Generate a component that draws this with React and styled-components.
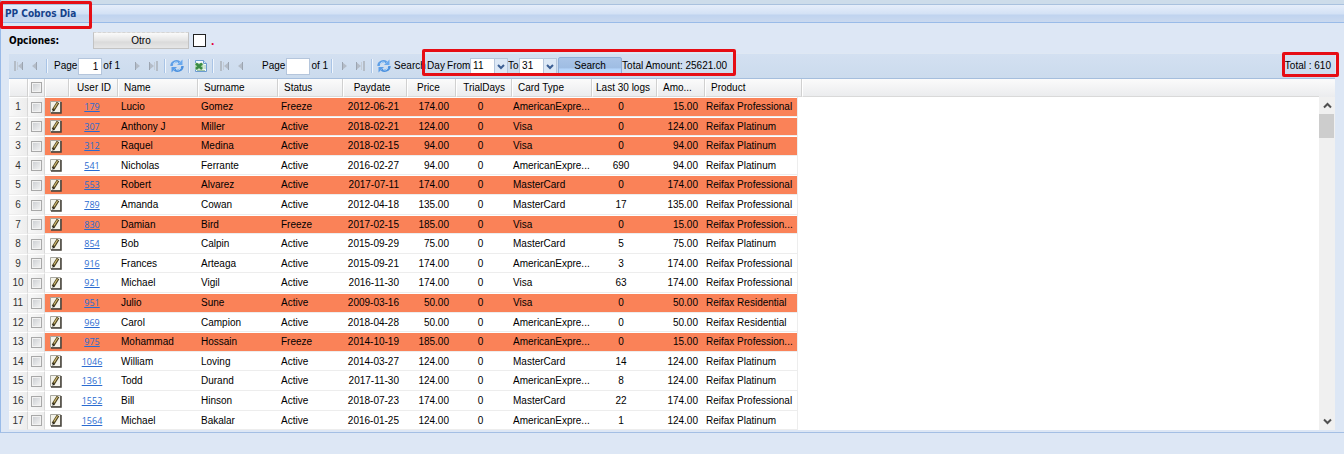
import React from "react";
import styled, { createGlobalStyle } from "styled-components";

const GlobalStyle = createGlobalStyle`
  * { box-sizing: border-box; }
  body {
    margin: 0;
    background: #dfe8f6;
    color: #000;
    font: 10px/14px "Liberation Sans", Arial, sans-serif;
  }
  button, input, select { font: inherit; color: inherit; margin: 0; }
`;

const Page = styled.main`
  min-height: 100vh;
  background: #dde7f5;
`;

const Panel = styled.section`
  position: relative;
  border-left: 1px solid #99bbe8;
  border-bottom: 1px solid #a4bfe4;
`;

const TitleBar = styled.header`
  display: flex;
  align-items: center;
  height: 23px;
  padding: 5px 4px 0;
  border-bottom: 1px solid #99bbe8;
  background: linear-gradient(#cddcea 0 4px, #a9c1de 4px 5px, #e6eefa 5px, #d3e1f5 14px, #bfd3ef 15px, #cad9ef 22px);
`;

const Title = styled.h1`
  margin: 0;
  color: #15428b;
  font: bold 10px/14px "DejaVu Sans Condensed", "DejaVu Sans", sans-serif;
`;

const Highlight = styled.span`
  position: absolute;
  border: 3px solid #e60d14;
  border-radius: 2px;
  pointer-events: none;
  z-index: 2;
`;

const TitleHighlight = styled(Highlight)`
  top: 1px;
  left: -1px;
  width: 92px;
  height: 28px;
`;

const FilterHighlight = styled(Highlight)`
  inset: -7px -9px 0 -5px;
`;

const TotalHighlight = styled(Highlight)`
  inset: -7px -8px -4px -3px;
`;

const Options = styled.div`
  display: flex;
  align-items: center;
  height: 30px;
  padding: 5px 8px 0;
`;

const OptionsLabel = styled.span`
  width: 84px;
  font: bold 10px/14px "DejaVu Sans Condensed", "DejaVu Sans", sans-serif;
`;

const OtherButton = styled.button`
  width: 96px;
  height: 17px;
  padding: 0;
  border: 1px solid #c3c3c3;
  border-top: 1px dashed #d5d5d5;
  background: linear-gradient(#fafafa, #e4e4e4 50%, #dadada 60%, #e6e6e6);
`;

const ColorBox = styled.input`
  appearance: none;
  width: 13px;
  height: 13px;
  margin-left: 4px;
  border: 1px solid #222;
  background: #fff;
`;

const Dot = styled.span`
  margin-left: 5px;
  color: #e3003a;
  font: bold 12px/14px "Liberation Sans", sans-serif;
`;

const Grid = styled.div`
  margin: 0 9px 2px 8px;
`;

const Toolbar = styled.div`
  display: flex;
  align-items: center;
  height: 26px;
  padding: 0 4px 0 2px;
  border-top: 1px solid #dfe8f3;
  border-bottom: 1px solid #a5bedd;
  background: linear-gradient(#d3e0f1, #cbdbed);
  white-space: nowrap;
`;

const IconButton = styled.button`
  display: flex;
  align-items: center;
  justify-content: center;
  width: 16px;
  height: 16px;
  padding: 0;
  border: 0;
  background: none;
`;

const Separator = styled.span`
  width: 2px;
  height: 14px;
  margin: 0 3px;
  border-left: 1px solid #a9c4e6;
  border-right: 1px solid #f0f6fd;
`;

const Pager = styled.label`
  display: flex;
  align-items: center;
  gap: 1px;
  margin-left: ${(p) => (p.$second ? 13 : 3)}px;
  margin-right: ${(p) => (p.$second ? 0 : 9)}px;
`;

const PageInput = styled.input`
  width: 24px;
  height: 17px;
  padding: 0 3px;
  border: 1px solid #b5c6dc;
  background: #fff;
  text-align: right;
`;

const RefreshText = styled.span`
  width: 35px;
  padding-left: 2px;
  overflow: hidden;
`;

const Filter = styled.form`
  position: relative;
  display: flex;
  align-items: center;
  height: 20px;
`;

const FilterLabel = styled.label`
  width: ${(p) => p.$width}px;
`;

const SelectBox = styled.span`
  position: relative;
  width: 38px;
  height: 17px;

  svg {
    position: absolute;
    right: 0;
    top: 0;
    pointer-events: none;
  }
`;

const Select = styled.select`
  appearance: none;
  display: block;
  width: 100%;
  height: 100%;
  padding: 0 14px 0 2px;
  border: 1px solid #b5c6dc;
  border-radius: 0;
  background: #fff;
`;

const SearchButton = styled.button`
  width: 64px;
  height: 18px;
  margin-left: 1px;
  padding: 0;
  border: 1px solid #8faed6;
  border-radius: 2px;
  background: linear-gradient(#a9c4e8, #9fbde3 60%, #b4d4fa 70%, #bcd8f8);
`;

const Total = styled.span`
  position: relative;
  margin-left: auto;
`;

const GridBody = styled.div`
  display: grid;
  grid-template-columns: minmax(0, 1fr) 16px;
  background: linear-gradient(#fbfbfb, #ebecee 18px, #fff 18px);
`;

const Table = styled.table`
  width: 100%;
  border-collapse: separate;
  border-spacing: 0;
  table-layout: fixed;
`;

const HeadCell = styled.th`
  height: 18px;
  padding: 0 6px 0 ${(p) => (p.$align ? 0 : 5)}px;
  border-right: 1px solid #d0d0d0;
  border-left: 1px solid #fff;
  border-bottom: 1px solid #d9d9d9;
  background: linear-gradient(#fbfbfb, #ebecee);
  font-weight: normal;
  line-height: 14px;
  text-align: ${(p) => p.$align || "left"};
  overflow: hidden;
  text-overflow: ellipsis;
  white-space: nowrap;

  &:last-child { border-right: 0; }
`;

const HeadCheckCell = styled(HeadCell)`
  padding: 0;
`;

const Row = styled.tr`
  height: 20px;
  &:nth-child(5n + 2), &:nth-child(5n + 4) { height: 19px; }
  --row: ${(p) => (p.$flagged ? "#fa8258" : "#fff")};
`;

const Cell = styled.td`
  padding: 0 ${(p) => p.$end || 0}px 0 ${(p) => p.$start ?? 3}px;
  border-top: 1px solid #fff;
  border-bottom: 1px solid #ededed;
  background: var(--row);
  line-height: 14px;
  text-align: ${(p) => p.$align || "left"};
  overflow: hidden;
  text-overflow: ellipsis;
  white-space: nowrap;
`;

const SideCell = styled(Cell)`
  padding: 0;
  border-right: 1px solid #d8d8d8;
  background: linear-gradient(90deg, #f8f8f8, #ededed);
  color: #333;
  text-align: center;
`;

const IconCell = styled(Cell)`
  padding: 0;

  button { margin: 0 3px; }
`;

const EmptyCell = styled.td`
  border-left: 1px solid #ededed;
`;

const Tick = styled.input`
  appearance: none;
  display: block;
  width: 11px;
  height: 11px;
  margin: 0 auto;
  border: 1px solid #a8a8a8;
  background: linear-gradient(135deg, #c9ccd0, #f5f5f5);
  box-shadow: inset 0 0 0 1px #f2f2f2;
`;

const UserLink = styled.a`
  color: #2a6bd0;
  font: 9px/14px "Open Sans", "Noto Sans", sans-serif;
  text-decoration: underline;
`;

const ScrollTrack = styled.div`
  display: flex;
  flex-direction: column;
  margin-top: 18px;
  background: #f0f0f0;
`;

const ScrollThumb = styled.div`
  width: 15px;
  height: 24px;
  background: #cdcdcd;
`;

const ScrollButton = styled(IconButton)`
  height: 17px;
  &:last-child { margin-top: auto; }
`;

const EdgeIcon = ({ flip }) => (
  <svg width="10" height="10" viewBox="0 0 10 10" transform={flip ? "scale(-1,1)" : undefined}>
    <path d="M1 0v10" stroke="#b4bcc6" strokeWidth="2" />
    <path d="M9 1v8L4 5z" fill="#b4bcc7" />
    <path d="M3.500 1v8" stroke="#c4ccd6" />
    <path d="M8.500 1v8" stroke="#9ca5b1" />
  </svg>
);

const StepIcon = ({ flip }) => (
  <svg width="8" height="10" viewBox="0 0 8 10" transform={flip ? "scale(-1,1)" : undefined}>
    <path d="M6 1v8L1 5z" fill="#b4bcc7" />
    <path d="M5.500 1v8" stroke="#9ca5b1" />
  </svg>
);

const RefreshIcon = () => (
  <svg width="14" height="14" viewBox="0 0 14 14" fill="none">
    <path d="M1.500 7C1.500 3 6 1 9.500 3.300" stroke="#5d9ee6" strokeWidth="2.400" />
    <path d="M12.500 0.500v5.500H7z" fill="#6aa9ee" />
    <path d="M12.500 7c0 4-4.500 6-8 3.700" stroke="#4c91df" strokeWidth="2.400" />
    <path d="M1.500 13.500V8H7z" fill="#5b9de8" />
    <path d="M3 5c1-2 3-2.500 5-1.500M11 9c-1 2-3 2.500-5 1.500" stroke="#b5d9fb" />
  </svg>
);

const ExcelIcon = () => (
  <svg width="14" height="14" viewBox="0 0 14 14">
    <path d="M1.500 1.500h8l3 3v8h-11z" fill="#f2f9fe" stroke="#6a9bd0" />
    <path d="M9.500 1.500v3h3" fill="#cfe1f3" stroke="#6a9bd0" />
    <path d="M1 4h8.500v6.500H1z" fill="#b5d9b4" />
    <path d="M2 4.500l6 5.500M8 4.500L2 10" stroke="#3a8b45" strokeWidth="2.400" />
    <path d="M10 7h2M10 9h2M3 11.500h8" stroke="#9fc4a6" />
  </svg>
);

const EditIcon = () => (
  <svg width="12" height="13" viewBox="0 0 12 13">
    <path d="M.5.500h10v11H.5z" fill="#f4f3ea" stroke="#a7a79f" />
    <path d="M11 1v11H1" fill="none" stroke="#46423a" strokeWidth="1.500" />
    <path d="M3 9.500L8 1.500" stroke="#4b4220" strokeWidth="3" />
    <path d="M4 7.500L7.500 2" stroke="#d3bd72" strokeWidth="1.200" />
    <path d="M2.500 11l.3-2.500 1.700 1z" fill="#222" />
  </svg>
);

const TriggerIcon = () => (
  <svg width="14" height="17" viewBox="0 0 14 17">
    <path d="M.5.5h13v16H.5z" fill="#dce8f6" stroke="#b5c6dc" />
    <path d="M4 7l3 3 3-3" fill="none" stroke="#3c5f94" strokeWidth="2" />
  </svg>
);

const ScrollIcon = ({ down }) => (
  <svg width="9" height="7" viewBox="0 0 9 7">
    <path d={down ? "M1 1.500l3.500 3.500L8 1.500" : "M1 5.500L4.500 2 8 5.500"} fill="none" stroke="#505050" strokeWidth="2" />
  </svg>
);

const widths = [19, 17, 24, 49, 80, 80, 65, 64, 49, 56, 80, 65, 48, 92, 5];

const A = "AmericanExpre...";
const M = "MasterCard";
const V = "Visa";
const PRO = "Reifax Professional";
const PLA = "Reifax Platinum";
const RES = "Reifax Residential";

const users = [
  ["179", "Lucio", "Gomez", "Freeze", "2012-06-21", "174.00", A, "0", "15.00", PRO, true],
  ["307", "Anthony J", "Miller", "Active", "2018-02-21", "124.00", V, "0", "124.00", PLA, true],
  ["312", "Raquel", "Medina", "Active", "2018-02-15", "94.00", V, "0", "94.00", PLA, true],
  ["541", "Nicholas", "Ferrante", "Active", "2016-02-27", "94.00", A, "690", "94.00", PLA, false],
  ["553", "Robert", "Alvarez", "Active", "2017-07-11", "174.00", M, "0", "174.00", PRO, true],
  ["789", "Amanda", "Cowan", "Active", "2012-04-18", "135.00", M, "17", "135.00", PRO, false],
  ["830", "Damian", "Bird", "Freeze", "2017-02-15", "185.00", V, "0", "15.00", "Reifax Profession...", true],
  ["854", "Bob", "Calpin", "Active", "2015-09-29", "75.00", M, "5", "75.00", PLA, false],
  ["916", "Frances", "Arteaga", "Active", "2015-09-21", "174.00", A, "3", "174.00", PRO, false],
  ["921", "Michael", "Vigil", "Active", "2016-11-30", "174.00", V, "63", "174.00", PRO, false],
  ["951", "Julio", "Sune", "Active", "2009-03-16", "50.00", V, "0", "50.00", RES, true],
  ["969", "Carol", "Campion", "Active", "2018-04-28", "50.00", A, "0", "50.00", RES, false],
  ["975", "Mohammad", "Hossain", "Freeze", "2014-10-19", "185.00", A, "0", "15.00", "Reifax Profession...", true],
  ["1046", "William", "Loving", "Active", "2014-03-27", "124.00", M, "14", "124.00", PLA, false],
  ["1361", "Todd", "Durand", "Active", "2017-11-30", "124.00", A, "8", "124.00", PLA, false],
  ["1552", "Bill", "Hinson", "Active", "2018-07-23", "174.00", M, "22", "174.00", PRO, false],
  ["1564", "Michael", "Bakalar", "Active", "2016-01-25", "124.00", A, "1", "124.00", PLA, false],
];

function UserRow({ user, index }) {
  const [id, name, surname, status, paydate, price, card, logs, amount, product, flagged] = user;
  return (
    <Row $flagged={flagged}>
      <SideCell>{index + 1}</SideCell>
      <SideCell><Tick type="checkbox" aria-label={`Select ${name} ${surname}`} /></SideCell>
      <IconCell><IconButton type="button" aria-label={`Edit ${name} ${surname}`}><EditIcon /></IconButton></IconCell>
      <Cell $align="center" $end={6}><UserLink href={`#${id}`}>{id}</UserLink></Cell>
      <Cell>{name}</Cell>
      <Cell>{surname}</Cell>
      <Cell>{status}</Cell>
      <Cell $align="right" $start={1} $end={8}>{paydate}</Cell>
      <Cell $align="right" $end={7}>{price}</Cell>
      <Cell $align="center" $end={10}>0</Cell>
      <Cell $start={1}>{card}</Cell>
      <Cell $align="center" $end={10}>{logs}</Cell>
      <Cell $align="right" $end={7}>{amount}</Cell>
      <Cell $start={1}>{product}</Cell>
      <EmptyCell colSpan={2} />
    </Row>
  );
}

export default function App() {
  return (
    <Page>
      <GlobalStyle />
      <Panel>
        <TitleBar>
          <Title>PP Cobros Dia</Title>
          <TitleHighlight />
        </TitleBar>
        <Options>
          <OptionsLabel>Opciones:</OptionsLabel>
          <OtherButton type="button">Otro</OtherButton>
          <ColorBox type="checkbox" aria-label="Otro" />
          <Dot>.</Dot>
        </Options>
        <Grid>
          <Toolbar>
            <IconButton aria-label="First page"><EdgeIcon /></IconButton>
            <IconButton aria-label="Previous page"><StepIcon /></IconButton>
            <Separator />
            <Pager>Page <PageInput defaultValue="1" /> of 1</Pager>
            <IconButton aria-label="Next page"><StepIcon flip /></IconButton>
            <IconButton aria-label="Last page"><EdgeIcon flip /></IconButton>
            <Separator />
            <IconButton aria-label="Refresh"><RefreshIcon /></IconButton>
            <Separator />
            <IconButton aria-label="Export to Excel"><ExcelIcon /></IconButton>
            <Separator />
            <IconButton aria-label="First page"><EdgeIcon /></IconButton>
            <IconButton aria-label="Previous page"><StepIcon /></IconButton>
            <Pager $second>Page <PageInput defaultValue="" /> of 1</Pager>
            <Separator />
            <IconButton aria-label="Next page"><StepIcon flip /></IconButton>
            <IconButton aria-label="Last page"><EdgeIcon flip /></IconButton>
            <Separator />
            <IconButton aria-label="Refresh"><RefreshIcon /></IconButton>
            <RefreshText>Search</RefreshText>
            <Filter onSubmit={(e) => e.preventDefault()}>
              <FilterLabel as="span" $width={20}>Day</FilterLabel>
              <FilterLabel $width={23} htmlFor="from">From</FilterLabel>
              <SelectBox>
                <Select id="from" defaultValue="11"><option>11</option></Select>
                <TriggerIcon />
              </SelectBox>
              <FilterLabel $width={11} htmlFor="to">To</FilterLabel>
              <SelectBox>
                <Select id="to" defaultValue="31"><option>31</option></Select>
                <TriggerIcon />
              </SelectBox>
              <SearchButton type="submit">Search</SearchButton>
              <span>Total Amount: 25621.00</span>
              <FilterHighlight />
            </Filter>
            <Total>Total : 610<TotalHighlight /></Total>
          </Toolbar>
          <GridBody>
            <Table>
              <colgroup>
                {widths.map((w, i) => <col key={i} width={w} />)}
                <col />
              </colgroup>
              <thead>
                <tr>
                  <HeadCell />
                  <HeadCheckCell><Tick type="checkbox" aria-label="Select all" /></HeadCheckCell>
                  <HeadCell />
                  <HeadCell $align="right">User ID</HeadCell>
                  <HeadCell>Name</HeadCell>
                  <HeadCell>Surname</HeadCell>
                  <HeadCell>Status</HeadCell>
                  <HeadCell $align="center">Paydate</HeadCell>
                  <HeadCell $align="center">Price</HeadCell>
                  <HeadCell $align="right">TrialDays</HeadCell>
                  <HeadCell>Card Type</HeadCell>
                  <HeadCell $align="right">Last 30 logs</HeadCell>
                  <HeadCell>Amo...</HeadCell>
                  <HeadCell colSpan={2}>Product</HeadCell>
                  <HeadCell />
                </tr>
              </thead>
              <tbody>
                {users.map((u, i) => <UserRow key={u[0]} user={u} index={i} />)}
              </tbody>
            </Table>
            <ScrollTrack>
              <ScrollButton aria-label="Scroll up"><ScrollIcon /></ScrollButton>
              <ScrollThumb />
              <ScrollButton aria-label="Scroll down"><ScrollIcon down /></ScrollButton>
            </ScrollTrack>
          </GridBody>
        </Grid>
      </Panel>
    </Page>
  );
}
